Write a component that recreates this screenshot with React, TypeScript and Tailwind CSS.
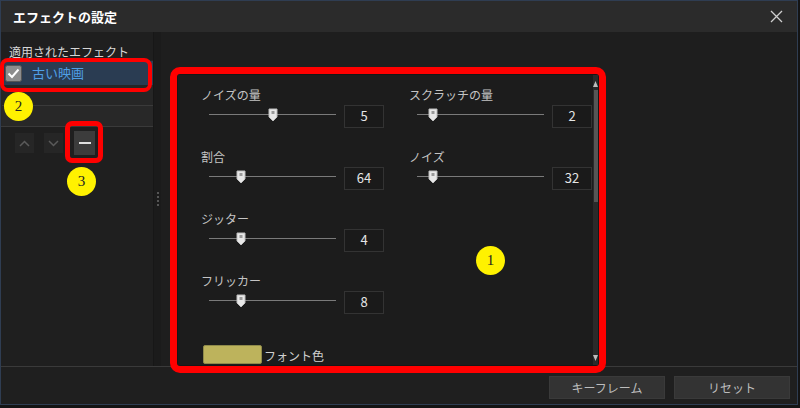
import React from 'react';

const font = { fontFamily: '"Noto Sans CJK JP", "Noto Sans", sans-serif' };

interface ParamProps {
  label: string;
  value: string;
  pos: number;
}

const leftParams: ParamProps[] = [
  { label: 'ノイズの量', value: '5', pos: 64 },
  { label: '割合', value: '64', pos: 32 },
  { label: 'ジッター', value: '4', pos: 32 },
  { label: 'フリッカー', value: '8', pos: 32 },
];

const rightParams: ParamProps[] = [
  { label: 'スクラッチの量', value: '2', pos: 16 },
  { label: 'ノイズ', value: '32', pos: 16 },
];

function Thumb() {
  return (
    <svg width="10" height="14" viewBox="0 0 10 14">
      <path d="M1 1 H9 V9 L5 13 L1 9 Z" fill="#e8e8e8" stroke="#bdbdbd" strokeWidth="1" />
      <rect x="3.5" y="3" width="3" height="3" fill="#9a9a9a" />
    </svg>
  );
}

function Param({ label, value, pos }: ParamProps) {
  return (
    <div className="flex flex-col">
      <div className="h-4 text-[12px] leading-4 text-[#c4c4c4]">{label}</div>
      <div className="mt-[1px] flex h-6 items-center">
        <div className="relative ml-2 h-6 w-[127px]">
          <div className="absolute left-0 right-0 top-[10px] h-px bg-[#7a7a7a]" />
          <div className="absolute top-[4px]" style={{ left: pos - 5 }}>
            <Thumb />
          </div>
        </div>
        <div className="ml-[8px] flex h-[23px] w-[40px] items-center justify-center border border-[#333] bg-[#1a1a1a] text-[13px] text-[#e6e6e6]">
          {value}
        </div>
      </div>
    </div>
  );
}

function Badge({ n, className }: { n: string; className: string }) {
  return (
    <div
      className={`absolute flex h-[29px] w-[29px] items-center justify-center rounded-full bg-[#fff200] text-[15px] text-[#222] ${className}`}
      style={{ fontFamily: '"Liberation Serif", serif' }}
    >
      {n}
    </div>
  );
}

export default function App() {
  return (
    <div className="relative h-[408px] w-[800px] overflow-hidden bg-[#141414]" style={font}>
      <div className="flex h-[405px] w-[798px] flex-col border border-[#2f3d52] bg-[#1e1e1e]">
        {/* Title bar */}
        <div className="flex h-[31px] items-center justify-between bg-[#2b2b2b] pl-3 pr-[14px]">
          <span className="text-[13px] font-bold text-white">エフェクトの設定</span>
          <svg width="13" height="13" viewBox="0 0 13 13">
            <path d="M1 1 L12 12 M12 1 L1 12" stroke="#cfcfcf" strokeWidth="1.3" />
          </svg>
        </div>

        {/* Body */}
        <div className="flex h-[334px]">
          {/* Left panel */}
          <div className="flex w-[152px] flex-col bg-[#1f1f1f]">
            <div className="h-[28px] pl-2 pt-[12px] text-[12px] leading-4 text-[#d6d6d6]">適用されたエフェクト</div>
            <div className="flex h-[67px] flex-col border-b border-[#3a3a3a] bg-[#262626] pl-[1px] pt-[1px]">
              <div className="flex h-[24px] items-center bg-[#2a3c52] pl-[3px]">
                <svg width="17" height="17" viewBox="0 0 17 17">
                  <rect x="0.5" y="0.5" width="16" height="16" rx="2" fill="#8d8d8d" stroke="#555" />
                  <path d="M3.5 8.5 L7 12 L13.5 4.5" fill="none" stroke="#fff" strokeWidth="2" />
                </svg>
                <span className="ml-[10px] text-[13px] text-[#4f9fe6]">古い映画</span>
              </div>
              <div className="h-[21px] border-b border-[#3a3a3a]" />
              <div className="flex-1 bg-[#282828]" />
            </div>
            <div className="mt-[4px] flex items-center pl-[14px]">
              <div className="flex h-[20px] w-[19px] items-center justify-center bg-[#262626]">
                <svg width="11" height="7" viewBox="0 0 11 7">
                  <path d="M1 6 L5.5 1.5 L10 6" fill="none" stroke="#5a5a5a" strokeWidth="1.5" />
                </svg>
              </div>
              <div className="ml-[10px] flex h-[20px] w-[19px] items-center justify-center bg-[#262626]">
                <svg width="11" height="7" viewBox="0 0 11 7">
                  <path d="M1 1 L5.5 5.5 L10 1" fill="none" stroke="#5a5a5a" strokeWidth="1.5" />
                </svg>
              </div>
              <div className="ml-[11px] flex h-[24px] w-[21px] items-center justify-center bg-[#3c3c3c]">
                <div className="h-[2px] w-[12px] bg-[#e0e0e0]" />
              </div>
            </div>
          </div>

          {/* Divider */}
          <div className="flex w-[8px] items-center justify-center border-l border-[#171717] bg-[#1b1b1b]">
            <div className="flex flex-col gap-[2px]">
              {[0, 1, 2, 3].map((i) => (
                <div key={i} className="h-[2px] w-[2px] bg-[#555]" />
              ))}
            </div>
          </div>

          {/* Right area */}
          <div className="flex flex-1 flex-col pl-[16px] pt-[42px]">
            <div className="flex w-[422px] flex-1 border border-[#161616] bg-[#1c1c1c]">
              <div className="flex flex-1 flex-col pl-[23px] pt-[12px]">
                <div className="flex">
                  <div className="flex w-[208px] flex-col gap-[21px]">
                    {leftParams.map((p) => (
                      <Param key={p.label} {...p} />
                    ))}
                  </div>
                  <div className="flex flex-col gap-[21px]">
                    {rightParams.map((p) => (
                      <Param key={p.label} {...p} />
                    ))}
                  </div>
                </div>
                <div className="mt-[29px] flex items-center">
                  <div className="ml-[2px] h-[19px] w-[59px] rounded-[2px] border border-[#8f8a4a] bg-[#bdb35c]" />
                  <span className="ml-[2px] mt-[4px] text-[12px] text-[#d0d0d0]">フォント色</span>
                </div>
              </div>
              {/* Scrollbar */}
              <div className="flex w-[5px] flex-col items-center bg-[#2a2a2a]">
                <svg width="5" height="6" viewBox="0 0 5 6" className="mt-[6px]">
                  <path d="M0 6 L2.5 0 L5 6 Z" fill="#bbb" />
                </svg>
                <div className="mt-[3px] h-[112px] w-[4px] bg-[#555]" />
                <div className="flex-1" />
                <svg width="5" height="6" viewBox="0 0 5 6" className="mb-[4px]">
                  <path d="M0 0 L2.5 6 L5 0 Z" fill="#bbb" />
                </svg>
              </div>
            </div>
          </div>
        </div>

        {/* Bottom bar */}
        <div className="flex flex-1 items-start justify-end gap-[9px] border-t border-[#3a3a3a] bg-[#1f1f1f] pr-[7px] pt-[9px]">
          <button className="flex h-[23px] w-[116px] items-center justify-center border border-[#3a3a3a] bg-[#333] text-[12px] text-[#bdbdbd]">
            キーフレーム
          </button>
          <button className="flex h-[23px] w-[116px] items-center justify-center border border-[#3a3a3a] bg-[#333] text-[12px] text-[#bdbdbd]">
            リセット
          </button>
        </div>
      </div>

      {/* Annotations */}
      <div className="absolute left-[170px] top-[67px] h-[306px] w-[436px] rounded-[10px] border-[7px] border-[#ff0000]" />
      <div className="absolute left-0 top-[58px] h-[34px] w-[152px] rounded-[8px] border-[4px] border-[#ff0000]" />
      <div className="absolute left-[65px] top-[121px] h-[42px] w-[38px] rounded-[7px] border-[5px] border-[#ff0000]" />
      <Badge n="1" className="left-[476px] top-[246px]" />
      <Badge n="2" className="left-[4px] top-[92px]" />
      <Badge n="3" className="left-[67px] top-[167px]" />
    </div>
  );
}
